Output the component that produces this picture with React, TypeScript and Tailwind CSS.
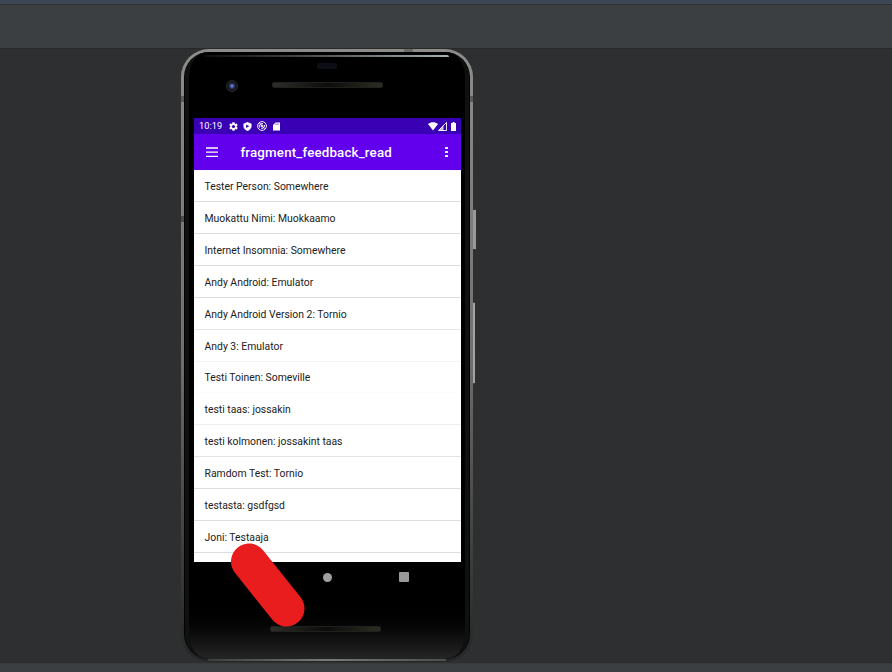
const rows = [
  { text: "Tester Person: Somewhere", style: "h-8 border-[#dedede]" },
  { text: "Muokattu Nimi: Muokkaamo", style: "h-8 border-[#dedede]" },
  { text: "Internet Insomnia: Somewhere", style: "h-8 border-[#dedede]" },
  { text: "Andy Android: Emulator", style: "h-8 border-[#dedede]" },
  { text: "Andy Android Version 2: Tornio", style: "h-8 border-[#e7e7e7]" },
  { text: "Andy 3: Emulator", style: "h-8 border-[#f3f3f3]" },
  { text: "Testi Toinen: Someville", style: "h-[31px] border-[#fcfcfc]" },
  { text: "testi taas: jossakin", style: "h-8 border-[#efefef]" },
  { text: "testi kolmonen: jossakint taas", style: "h-8 border-[#e3e3e3]" },
  { text: "Ramdom Test: Tornio", style: "h-8 border-[#dedede]" },
  { text: "testasta: gsdfgsd", style: "h-8 border-[#dedede]" },
  { text: "Joni: Testaaja", style: "h-8 border-[#dedede]" },
];

function StatusBar() {
  return (
    <div className="flex h-4 shrink-0 items-center bg-[#3a00b3] pl-[5.5px] pr-[5px] text-white">
      <span className="w-[30px] text-[9.2px] leading-4 tracking-[0.1px]">10:19</span>
      <svg className="h-[9px] w-[9px] shrink-0" viewBox="2 2 20 20" fill="white">
        <path d="M19.140 12.940c.040-.300.060-.610.060-.940 0-.320-.020-.640-.070-.940l2.030-1.580a.49.49 0 0 0 .12-.61l-1.920-3.320a.49.49 0 0 0-.59-.22l-2.390.96a7 7 0 0 0-1.620-.94L14.400 2.810a.48.48 0 0 0-.48-.41h-3.840a.47.47 0 0 0-.47.41l-.36 2.540a7.200 7.200 0 0 0-1.620.94l-2.390-.96a.48.48 0 0 0-.59.22L2.740 8.870a.47.47 0 0 0 .12.61l2.030 1.580a6 6 0 0 0-.02 1.880l-2.030 1.580a.49.49 0 0 0-.12.61l1.920 3.320c.12.22.37.29.59.22l2.390-.96c.5.380 1.030.700 1.620.94l.36 2.540c.05.240.24.410.48.410h3.840c.24 0 .44-.17.47-.41l.36-2.540a7 7 0 0 0 1.620-.94l2.390.96c.22.080.47 0 .59-.22l1.920-3.320a.47.47 0 0 0-.12-.61zM12 15.600a3.600 3.600 0 1 1 0-7.200 3.600 3.600 0 0 1 0 7.200z" />
      </svg>
      <svg className="ml-[5px] h-[9px] w-[9px] shrink-0" viewBox="0 0 20 20">
        <path d="M10 0 19 4v6c0 4-4 8-9 10-5-2-9-6-9-10V4z" fill="white" />
        <path d="M7 5.500v8l7-4z" fill="#3a00b3" />
      </svg>
      <svg className="ml-[5px] h-[10px] w-[10px] shrink-0" viewBox="0 0 20 20" fill="none" stroke="white">
        <circle cx="10" cy="10" r="8.800" strokeWidth="1.900" />
        <path d="M5 13a5.500 5.500 0 0 1 7-7.500M15 8a5.500 5.500 0 0 1-6.500 6.800M5 4l10 11M8 10a2 2 0 1 1 4 0 2 2 0 0 1-4 0" strokeWidth="1.900" />
      </svg>
      <svg className="ml-[5.5px] h-[9px] w-[7px] shrink-0" viewBox="0 0 14 18">
        <path d="M5 1h9v16H0V6z" fill="white" />
        <path d="M5.500 3v3M8 3v3M10.500 3v3" stroke="#3a00b3" strokeWidth="1" />
      </svg>
      <svg className="ml-auto h-[9px] w-[10px] shrink-0" viewBox="0 0 20 18" fill="white">
        <path d="M0 4C6-.5 14-.5 20 4L10 17z" />
      </svg>
      <svg className="h-[9px] w-[9px] shrink-0" viewBox="0 0 18 18">
        <path d="M17 1v16H1z" fill="none" stroke="white" strokeWidth="1.800" />
        <path d="M11 6v11H1z" fill="white" opacity=".75" />
      </svg>
      <svg className="ml-[4px] h-[9px] w-[5px] shrink-0" viewBox="0 0 10 18" fill="white">
        <path d="M3 0h4v2h3v16H0V2h3z" />
      </svg>
    </div>
  );
}

function AppBar() {
  return (
    <div className="flex h-9 shrink-0 items-center bg-[#6200ee] pl-[12px] pr-[13px]">
      <svg className="-mt-px h-[10px] w-[12px] shrink-0" viewBox="0 0 12 10" stroke="white" strokeWidth="1.300">
        <path d="M0 1h12M0 5.200h12M0 9.400h12" />
      </svg>
      <h1 className="mt-px ml-[23px] text-[13.3px] font-medium tracking-[0.18px] text-white">fragment_feedback_read</h1>
      <div className="ml-auto flex w-[2px] flex-col items-center gap-[2px]">
        <span className="h-[2px] w-[2.500px] rounded-[0.5px] bg-white" />
        <span className="h-[2px] w-[2.500px] rounded-[0.5px] bg-white" />
        <span className="h-[2px] w-[2.500px] rounded-[0.5px] bg-white" />
      </div>
    </div>
  );
}

function Speaker() {
  return (
    <div className="h-[6px] w-[111px] rounded-[2px] border border-[#20201e] bg-linear-to-r from-[#2f2e2a] via-[#0c0c0a] to-[#2d2c24]" />
  );
}

function Phone() {
  return (
    <div className="relative h-[613px] w-[292px] shrink-0">
      <div className="absolute top-[160px] left-[291px] h-[41px] w-[4px] rounded-r-[1px] border-y border-l border-[#353535] bg-[#999]" />
      <div className="absolute top-[253px] left-[291px] h-[82px] w-[3px] rounded-r-[1px] border-y border-l border-[#444] bg-[#a3a3a0]" />
      <div className="relative h-full w-full overflow-hidden rounded-[28px] bg-linear-to-b from-[#8c8c8a] via-[#707070] via-50% to-[#242525] pt-[3px] pr-[3px] pb-[3px] pl-[3px]">
        <div className="h-full rounded-[25px] bg-linear-to-r from-[#030303] via-[#191919] via-50% to-[#030303] px-[1px]">
          <div className="flex h-full flex-col items-center rounded-[24px] border-x-4 border-[#101010] bg-linear-to-b from-black from-90% to-[#252525]">
            <div className="flex h-[66px] w-full shrink-0 flex-col items-center">
              <div className="mt-[3px] h-[2px] w-[244px] rounded-tr-[8px] bg-linear-to-r from-[#0c0e0e] via-[#555a59] to-[#a8b2b5]" />
              <div className="mt-[6px] h-[6px] w-[20px] rounded-[2px] bg-[#0d0e16]" />
              <div className="mt-[10px] flex h-[14px] w-full items-center pl-[37px]">
                <div className="flex size-[12px] items-center justify-center rounded-full border border-[#292929] bg-[#16171b]">
                  <div className="size-[6px] rounded-full bg-radial from-[#829ae9] via-[#303e7d] to-[#151b3d]" />
                </div>
                <div className="-mt-[2px] ml-[34px]">
                  <Speaker />
                </div>
              </div>
            </div>
            <div className="flex h-[444px] w-[267px] shrink-0 flex-col overflow-hidden bg-white">
              <StatusBar />
              <AppBar />
              <div>
                {rows.map((row) => (
                  <div key={row.text} className={`flex items-center border-b pt-0.5 pl-[11px] text-[10.4px] leading-4 text-[#212121] ${row.style}`}>
                    {row.text}
                  </div>
                ))}
              </div>
            </div>
            <div className="flex h-[30px] w-[267px] shrink-0 items-center pl-[129px]">
              <div className="size-[9px] rounded-full bg-[#a0a0a0]" />
              <div className="ml-[67px] size-[10px] rounded-[1px] bg-[#999]" />
            </div>
            <div className="mt-[34px] mr-[4px]">
              <Speaker />
            </div>
          </div>
        </div>
        <div className="absolute top-0 left-[223px] h-[3px] w-[9px] bg-[#6a6a69]" />
        <div className="absolute top-[47px] left-0 h-[6px] w-[3px] bg-[#5b5b5b]" />
        <div className="absolute top-[167px] left-0 h-[6px] w-[3px] bg-[#4b4b4b]" />
        <div className="absolute top-[47px] right-0 h-[6px] w-[3px] bg-[#5b5b5b]" />
        <div className="absolute bottom-[1px] left-[27px] h-[2px] w-[238px] bg-linear-to-r from-[#3c3e3e] via-[#777a79] to-[#4c4e4e]" />
      </div>
      <svg className="absolute top-[490px] left-[45px] h-[92px] w-[84px]" viewBox="0 0 84 92">
        <path d="M23 22.500 60.500 69.500" stroke="#e91d1d" strokeWidth="36" strokeLinecap="round" />
      </svg>
    </div>
  );
}

export default function App() {
  return (
    <main className="flex h-[672px] w-[892px] flex-col overflow-hidden bg-[#2e2f30] font-[Roboto,sans-serif]">
      <div className="h-[4px] shrink-0 bg-[#3b4754]" />
      <div className="h-[44px] shrink-0 border-t border-[#333] bg-[#3c3f41]" />
      <div className="flex h-[615px] shrink-0 border-t border-[#292929] pl-[181px]">
        <Phone />
      </div>
      <div className="h-[9px] shrink-0 border-t border-[#37393a] bg-[#3c3f41]" />
    </main>
  );
}
